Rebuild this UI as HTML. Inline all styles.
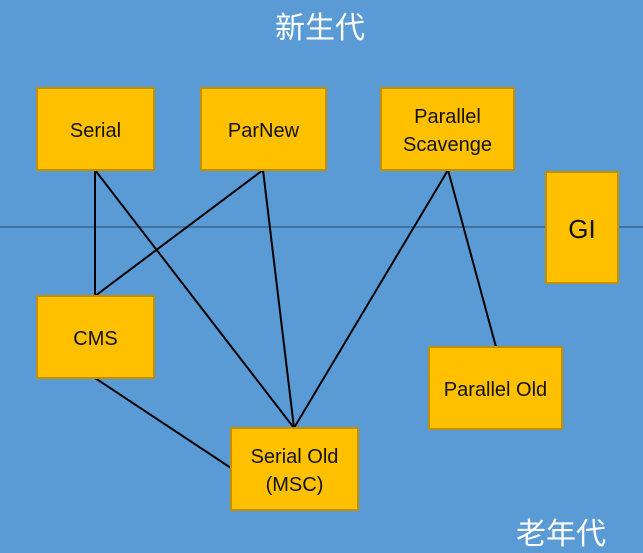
<!DOCTYPE html>
<html><head><meta charset="utf-8"><style>
body{margin:0;width:643px;height:551px;background:#5b9bd5;position:relative;overflow:hidden;font-family:"Liberation Sans","Noto Sans CJK SC",sans-serif}
.b{position:absolute;box-sizing:border-box;background:#ffc000;border:2px solid #c09000;display:flex;align-items:center;justify-content:center;text-align:center;font-size:20px;line-height:28px;color:#111;padding-top:3px}
.t{position:absolute;color:#fff;font-size:30px;font-family:"Noto Sans CJK SC",sans-serif}
</style></head><body>
<div style="position:absolute;left:0;top:226px;width:643px;height:2px;background:#41719c"></div>
<svg width="643" height="551" style="position:absolute;left:0;top:0">
<g stroke="#000" stroke-width="2" fill="none">
<line x1="95" y1="170" x2="95" y2="296"/>
<line x1="95" y1="170" x2="294" y2="428"/>
<line x1="263" y1="170" x2="95" y2="296"/>
<line x1="263" y1="170" x2="294" y2="428"/>
<line x1="448" y1="170" x2="294" y2="428"/>
<line x1="448" y1="170" x2="496" y2="347"/>
<line x1="95" y1="378" x2="231" y2="468"/>
</g></svg>
<div class="t" style="left:275px;top:3px">新生代</div>
<div class="t" style="left:516px;top:509px">老年代</div>
<div class="b" style="left:36px;top:87px;width:119px;height:84px">Serial</div>
<div class="b" style="left:200px;top:87px;width:127px;height:84px">ParNew</div>
<div class="b" style="left:380px;top:87px;width:135px;height:84px">Parallel<br>Scavenge</div>
<div class="b" style="left:545px;top:171px;width:74px;height:113px;font-size:26px">GI</div>
<div class="b" style="left:36px;top:295px;width:119px;height:84px">CMS</div>
<div class="b" style="left:428px;top:346px;width:135px;height:84px">Parallel Old</div>
<div class="b" style="left:230px;top:427px;width:129px;height:84px">Serial Old<br>(MSC)</div>
</body></html>
